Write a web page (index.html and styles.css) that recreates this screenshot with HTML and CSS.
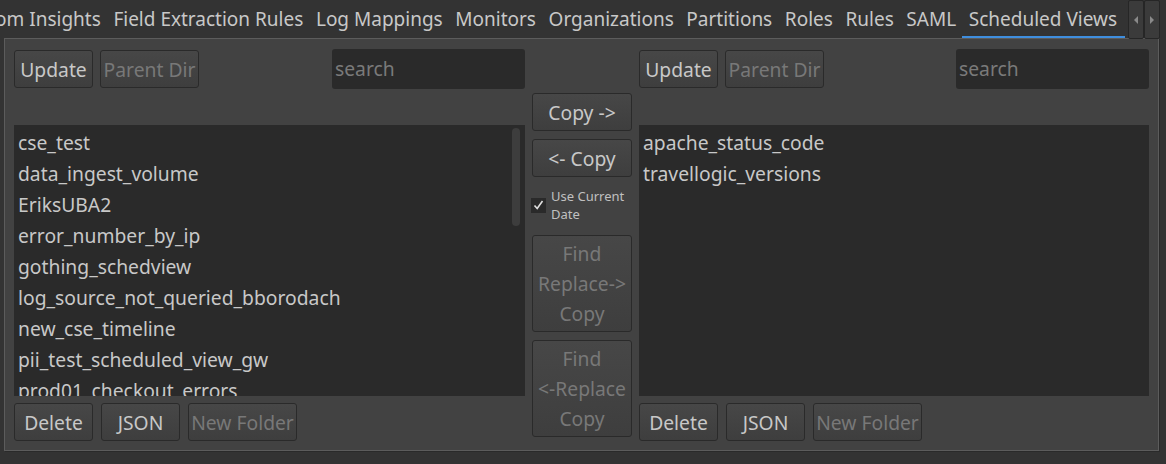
FILE: index.html
```html
<!DOCTYPE html>
<html>
<head>
<meta charset="utf-8">
<link rel="stylesheet" href="styles.css">
</head>
<body>
<div class="tabbar">
  <div class="tabs">
    <div class="tab first">Custom Insights</div>
    <div class="tab">Field Extraction Rules</div>
    <div class="tab">Log Mappings</div>
    <div class="tab">Monitors</div>
    <div class="tab">Organizations</div>
    <div class="tab">Partitions</div>
    <div class="tab">Roles</div>
    <div class="tab">Rules</div>
    <div class="tab">SAML</div>
    <div class="tab active">Scheduled Views</div>
  </div>
  <div class="scrollbtn"><svg width="6" height="8" viewBox="0 0 6 8"><path d="M5 0 L1 4 L5 8 Z" fill="#8a8a8a"/></svg></div>
  <div class="scrollbtn"><svg width="6" height="8" viewBox="0 0 6 8"><path d="M1 0 L5 4 L1 8 Z" fill="#8a8a8a"/></svg></div>
</div>
<div class="panel">
  <div class="col side">
    <div class="toprow">
      <button class="btn w79">Update</button>
      <button class="btn w99 disabled">Parent Dir</button>
      <div class="search">search</div>
    </div>
    <div class="list">
      <div class="item">cse_test</div>
      <div class="item">data_ingest_volume</div>
      <div class="item">EriksUBA2</div>
      <div class="item">error_number_by_ip</div>
      <div class="item">gothing_schedview</div>
      <div class="item">log_source_not_queried_bborodach</div>
      <div class="item">new_cse_timeline</div>
      <div class="item">pii_test_scheduled_view_gw</div>
      <div class="item">prod01_checkout_errors</div>
      <div class="thumb"></div>
    </div>
    <div class="botrow">
      <button class="btn w79">Delete</button>
      <button class="btn w79">JSON</button>
      <button class="btn w109 disabled">New Folder</button>
    </div>
  </div>
  <div class="col middle">
    <button class="btn mid">Copy -&gt;</button>
    <button class="btn mid">&lt;- Copy</button>
    <div class="check">
      <div class="box"><svg width="11" height="10" viewBox="0 0 11 10"><path d="M1.5 5.5 L4.2 8.5 L9.5 1" fill="none" stroke="#e0e0e0" stroke-width="1.6"/></svg></div>
      <div class="checklabel">Use Current<br>Date</div>
    </div>
    <button class="btn tall disabled">Find<br>Replace-&gt;<br>Copy</button>
    <button class="btn tall disabled">Find<br>&lt;-Replace<br>Copy</button>
  </div>
  <div class="col side">
    <div class="toprow">
      <button class="btn w79">Update</button>
      <button class="btn w99 disabled">Parent Dir</button>
      <div class="search">search</div>
    </div>
    <div class="list">
      <div class="item">apache_status_code</div>
      <div class="item">travellogic_versions</div>
    </div>
    <div class="botrow">
      <button class="btn w79">Delete</button>
      <button class="btn w79">JSON</button>
      <button class="btn w109 disabled">New Folder</button>
    </div>
  </div>
</div>
</body>
</html>
```

FILE: styles.css
```css
html, body {
  margin: 0;
  padding: 0;
  background: #333333;
  width: 1166px;
  height: 464px;
  overflow: hidden;
  font-family: "Noto Sans", "Open Sans", sans-serif;
  font-size: 19.3px;
  color: #c8c8c8;
}

.tabbar {
  display: flex;
  height: 38px;
}

.tabs {
  display: flex;
  width: 1128px;
  overflow: hidden;
  font-size: 19px;
}

.tab {
  padding: 0 6.3px;
  line-height: 38px;
  white-space: nowrap;
  flex: none;
}

.tab.first {
  margin-left: -51px;
}

.tab.active {
  padding-right: 8px;
  box-shadow: inset 0 -2px 0 #3f8ede;
}

.scrollbtn {
  width: 14px;
  height: 37px;
  background: #3b3b3b;
  border: 1px solid #262626;
  border-radius: 2px;
  display: flex;
  align-items: center;
  justify-content: center;
}

.panel {
  margin-left: 4px;
  width: 1155px;
  height: 413px;
  box-sizing: border-box;
  background: #424242;
  border: 1px solid #5c5c5c;
  box-shadow: 1px 1px 0 #2a2a2a;
  padding: 10px 9px 9px 9px;
  display: grid;
  grid-template-columns: 511px 100px 510px;
  column-gap: 7px;
}

.col {
  display: flex;
  flex-direction: column;
  min-height: 0;
}

.toprow, .botrow {
  display: flex;
  align-items: center;
  gap: 7px;
}

.toprow {
  height: 40px;
}

.botrow {
  height: 38px;
  margin-top: 7px;
  gap: 8px;
}

.btn {
  font: inherit;
  color: #c8c8c8;
  height: 38px;
  box-sizing: border-box;
  background: linear-gradient(#474747, #3e3e3e);
  border: 1px solid #2a2a2a;
  border-radius: 3px;
  padding: 0;
  margin: 0;
  flex: none;
  white-space: nowrap;
}

.btn.disabled {
  color: #787878;
}

.w79 { width: 79px; }
.w99 { width: 99px; }
.w109 { width: 109px; }

.search {
  margin-left: auto;
  width: 193px;
  height: 40px;
  box-sizing: border-box;
  background: #2a2a2a;
  border-radius: 3px;
  padding-left: 3px;
  line-height: 40px;
  color: #7a7a7a;
}

.list {
  margin-top: 36px;
  height: 272px;
  background: #2a2a2a;
  overflow: hidden;
  position: relative;
  padding-top: 2px;
  box-sizing: border-box;
}

.item {
  height: 31px;
  line-height: 31px;
  padding-left: 4px;
  white-space: nowrap;
}

.thumb {
  position: absolute;
  right: 5px;
  top: 3px;
  width: 8px;
  height: 98px;
  border-radius: 4px;
  background: #3d3d3d;
}

.middle {
  padding-top: 44px;
}

.btn.mid {
  width: 100px;
  margin-bottom: 8px;
}

.btn.tall {
  width: 100px;
  height: 97px;
  line-height: 30px;
  margin-bottom: 8px;
}

.check {
  display: flex;
  align-items: center;
  gap: 5px;
  margin-left: -1px;
  margin-top: 2px;
  height: 36px;
  margin-bottom: 12px;
}

.box {
  width: 15px;
  height: 15px;
  background: #2a2a2a;
  display: flex;
  align-items: center;
  justify-content: center;
  flex: none;
}

.checklabel {
  font-size: 13px;
  line-height: 18px;
  color: #c0c0c0;
}
```
